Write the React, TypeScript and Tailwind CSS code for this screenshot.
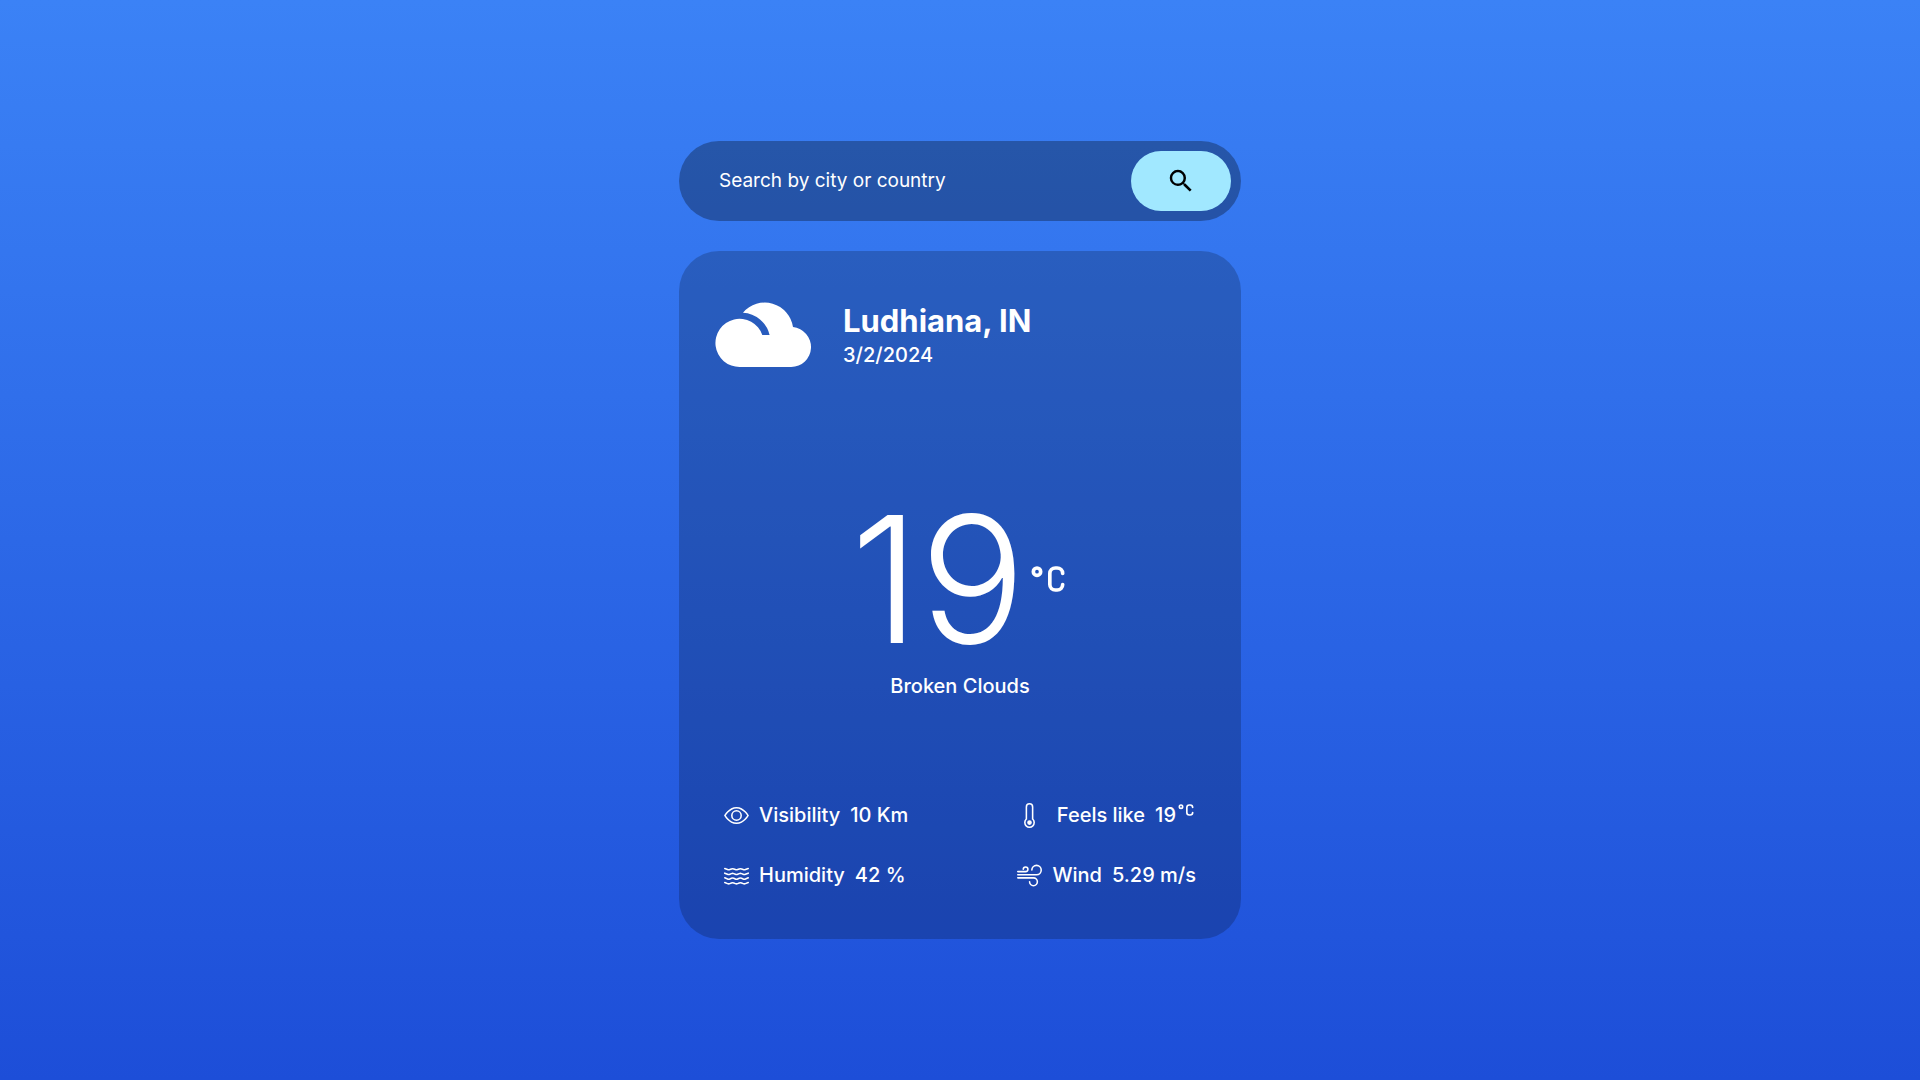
import type { ReactNode } from "react";
import { BsEye, BsThermometer, BsWater, BsWind } from "react-icons/bs";
import { MdSearch } from "react-icons/md";
import { TbTemperatureCelsius } from "react-icons/tb";

function CloudyIcon() {
  return (
    <svg viewBox="0 0 96 64" className="h-16 w-24 overflow-visible" fill="currentColor" aria-hidden="true">
      <path d="M27 9.700A28.500 28.500 0 0 1 77 24.100A20 20 0 0 1 75.200 64H24A24.100 24.100 0 1 1 46.300 32H53.600A29 29 0 0 0 27 9.700Z" />
    </svg>
  );
}

function Stat({ icon, label, children }: { icon: ReactNode; label: string; children: ReactNode }) {
  return (
    <div className="flex items-center justify-between gap-2.5">
      {icon}
      <p className="flex gap-2.5">
        <span>{label}</span>
        <span className="flex">{children}</span>
      </p>
    </div>
  );
}

export default function App() {
  return (
    <main className="flex min-h-screen flex-col items-center justify-center bg-linear-to-b/srgb from-[#3b82f6] to-[#1d4ed8] font-['Inter',sans-serif] text-white">
      <div className="flex w-full max-w-[562px] flex-col gap-[30px]">
        <form
          className="flex h-20 items-center rounded-[40px] bg-black/30 pr-2.5 pl-10"
          onSubmit={(e) => e.preventDefault()}
        >
          <input
            type="text"
            aria-label="Search by city or country"
            placeholder="Search by city or country"
            className="min-w-0 flex-1 bg-transparent text-[19px] outline-none placeholder:text-white"
          />
          <button
            type="submit"
            aria-label="Search"
            className="flex h-[60px] w-[100px] items-center justify-center rounded-[30px] bg-[#a1e8ff] text-black"
          >
            <MdSearch className="size-[30px]" />
          </button>
        </form>

        <section className="flex flex-col rounded-[40px] bg-black/20 px-[37px] pt-[52px] pb-[49px]">
          <header className="flex items-start gap-[31px]">
            <CloudyIcon />
            <div>
              <h1 className="text-[31px] leading-9 font-bold">Ludhiana, IN</h1>
              <p className="text-xl leading-8 font-medium">3/2/2024</p>
            </div>
          </header>

          <div className="flex flex-col items-center pt-[116px] pb-[99px]">
            <div className="flex items-center">
              <span className="text-[176px] leading-[184px] font-light">19</span>
              <TbTemperatureCelsius className="size-11" />
            </div>
            <p className="text-xl leading-[30px] font-medium">Broken Clouds</p>
          </div>

          <div className="flex justify-between px-2 text-xl leading-[30px] font-medium">
            <div className="flex flex-col items-start gap-[30px]">
              <Stat icon={<BsEye className="size-[25px]" />} label="Visibility">10 Km</Stat>
              <Stat icon={<BsWater className="size-[25px]" />} label="Humidity">42 %</Stat>
            </div>
            <div className="flex flex-col gap-[30px]">
              <Stat icon={<BsThermometer className="size-[25px]" />} label="Feels like">
                19
                <TbTemperatureCelsius className="size-5" />
              </Stat>
              <Stat icon={<BsWind className="size-[25px]" />} label="Wind">5.29 m/s</Stat>
            </div>
          </div>
        </section>
      </div>
    </main>
  );
}
